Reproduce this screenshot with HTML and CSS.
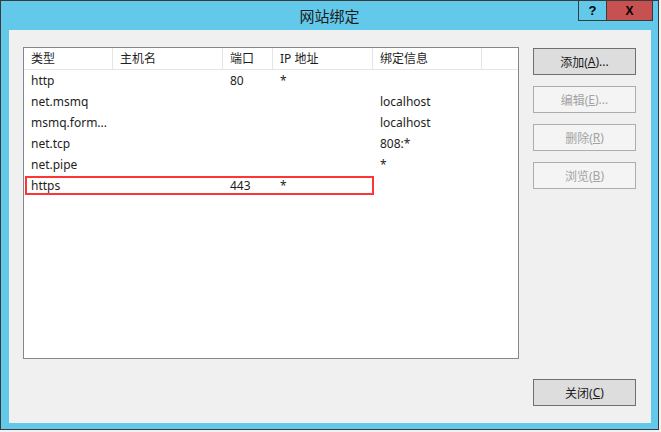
FILE: index.html
```html
<!DOCTYPE html>
<html lang="zh-CN">
<head>
<meta charset="utf-8">
<title>网站绑定</title>
<link rel="stylesheet" href="styles.css">
</head>
<body>
<div class="window">
  <div class="titlebar">
    <div class="title">网站绑定</div>
    <div class="caption">
      <div class="cap help">?</div>
      <div class="cap close">X</div>
    </div>
  </div>
  <div class="client">
    <div class="listbox">
      <div class="grid header">
        <div class="hcell">类型</div>
        <div class="hcell">主机名</div>
        <div class="hcell">端口</div>
        <div class="hcell">IP 地址</div>
        <div class="hcell">绑定信息</div>
      </div>
      <div class="grid row"><div class="cell">http</div><div class="cell"></div><div class="cell">80</div><div class="cell">*</div><div class="cell"></div></div>
      <div class="grid row"><div class="cell">net.msmq</div><div class="cell"></div><div class="cell"></div><div class="cell"></div><div class="cell">localhost</div></div>
      <div class="grid row"><div class="cell">msmq.form...</div><div class="cell"></div><div class="cell"></div><div class="cell"></div><div class="cell">localhost</div></div>
      <div class="grid row"><div class="cell">net.tcp</div><div class="cell"></div><div class="cell"></div><div class="cell"></div><div class="cell">808:*</div></div>
      <div class="grid row"><div class="cell">net.pipe</div><div class="cell"></div><div class="cell"></div><div class="cell"></div><div class="cell">*</div></div>
      <div class="grid row marked"><div class="cell">https</div><div class="cell"></div><div class="cell">443</div><div class="cell">*</div><div class="cell"></div></div>
    </div>
    <div class="side">
      <div class="btn">添加(<u>A</u>)...</div>
      <div class="btn disabled">编辑(<u>E</u>)...</div>
      <div class="btn disabled">删除(<u>R</u>)</div>
      <div class="btn disabled">浏览(<u>B</u>)</div>
    </div>
    <div class="bottom">
      <div class="btn">关闭(<u>C</u>)</div>
    </div>
  </div>
</div>
</body>
</html>
```

FILE: styles.css
```css
html, body {
  margin: 0;
  padding: 0;
}
body {
  background: #f2f2f2;
  width: 661px;
  height: 432px;
  overflow: hidden;
  font-family: "Noto Sans", "Noto Sans CJK SC", sans-serif;
  font-size: 12px;
  color: #1a1a1a;
}
.window {
  width: 659px;
  height: 430px;
  box-sizing: border-box;
  border: 1px solid #3a3a3a;
  background: #63c9ea;
  display: flex;
  flex-direction: column;
}
.titlebar {
  height: 29px;
  display: grid;
  grid-template-columns: 1fr auto 1fr;
  flex: none;
}
.title {
  grid-column: 2;
  align-self: center;
  font-size: 15px;
  line-height: 20px;
  color: #1b1b1b;
  padding-top: 1px;
}
.caption {
  grid-column: 3;
  justify-self: end;
  align-self: start;
  display: flex;
  margin-right: 5px;
}
.cap {
  height: 19px;
  border-bottom: 1px solid #3a3a3a;
  border-left: 1px solid #3a3a3a;
  display: flex;
  align-items: center;
  justify-content: center;
  font-family: "Liberation Sans", sans-serif;
  font-weight: bold;
  color: #000;
}
.help {
  width: 27px;
  font-size: 13px;
}
.close {
  width: 45px;
  background: #c75050;
  border-right: 1px solid #3a3a3a;
  font-size: 12px;
}
.client {
  margin: 0 7px 6px 8px;
  flex: 1;
  background: #f0f0f0;
  display: grid;
  grid-template-columns: 496px 103px;
  grid-template-rows: 312px 27px;
  column-gap: 14px;
  row-gap: 20px;
  padding: 17px 15px 17px 14px;
}
.listbox {
  box-sizing: border-box;
  border: 1px solid #828790;
  background: #fff;
}
.grid {
  display: grid;
  grid-template-columns: 89px 110px 50px 100px 109px;
}
.header {
  height: 21px;
  border-bottom: 1px solid #e5e5e5;
}
.hcell {
  border-right: 1px solid #e5e5e5;
  padding-left: 7px;
  line-height: 21px;
  white-space: nowrap;
  color: #1e1e1e;
}
.row {
  height: 21px;
}
.cell {
  padding-left: 7px;
  line-height: 21px;
  white-space: nowrap;
  color: #1e1e1e;
}
.marked {
  position: relative;
}
.marked::after {
  content: "";
  position: absolute;
  left: 1px;
  top: 1px;
  width: 349px;
  height: 19px;
  box-sizing: border-box;
  border: 2px solid #ff3434;
}
.side {
  display: flex;
  flex-direction: column;
  gap: 11px;
  padding-top: 1px;
}
.btn {
  height: 27px;
  box-sizing: border-box;
  border: 1px solid #707070;
  background: #dddddd;
  display: flex;
  align-items: center;
  justify-content: center;
  color: #1a1a1a;
  white-space: nowrap;
}
.btn u {
  text-decoration: underline;
  text-underline-offset: 1px;
}
.btn.disabled {
  border-color: #adadad;
  background: #f4f4f4;
  color: #a3a3a3;
}
.bottom {
  grid-column: 2;
}
```
